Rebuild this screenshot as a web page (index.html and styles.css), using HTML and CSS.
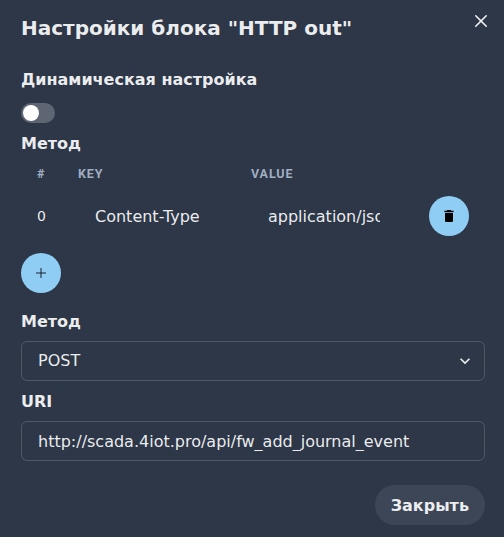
FILE: index.html
```
<!DOCTYPE html>
<html lang="ru">

<head>
    <meta charset="UTF-8">
    <title>Настройки блока</title>
    <link rel="stylesheet" href="styles.css">
</head>

<body>
    <section class="modal">
        <header class="modal-header">
            <h1>Настройки блока "HTTP out"</h1>
            <button type="button" class="close" aria-label="Close">
                <svg viewBox="0 0 24 24" width="12" height="12">
                    <path fill="currentColor" d="M.439,21.44a1.5,1.5,0,0,0,2.122,2.121L11.823,14.3a.25.25,0,0,1,.354,0l9.262,9.263a1.5,1.5,0,1,0,2.122-2.121L14.3,12.177a.25.25,0,0,1,0-.354l9.263-9.262A1.5,1.5,0,0,0,21.439.44L12.177,9.7a.25.25,0,0,1-.354,0L2.561.44A1.5,1.5,0,0,0,.439,2.561L9.7,11.823a.25.25,0,0,1,0,.354Z" />
                </svg>
            </button>
        </header>

        <div class="modal-body">
            <div class="label">Динамическая настройка</div>
            <label class="switch">
                <input type="checkbox">
                <span class="thumb"></span>
            </label>

            <div class="label">Метод</div>
            <table>
                <thead>
                    <tr>
                        <th class="col-num">#</th>
                        <th class="col-key">Key</th>
                        <th class="col-value">Value</th>
                        <th></th>
                    </tr>
                </thead>
                <tbody>
                    <tr>
                        <td>0</td>
                        <td><input type="text" class="input plain" value="Content-Type"></td>
                        <td><input type="text" class="input plain" value="application/json"></td>
                        <td>
                            <button type="button" class="round" aria-label="Delete">
                                <svg viewBox="0 0 24 24" width="16" height="16">
                                    <path fill="#000" d="M6 19c0 1.100.9 2 2 2h8c1.100 0 2-.9 2-2V7H6v12zM19 4h-3.500l-1-1h-5l-1 1H5v2h14V4z" />
                                </svg>
                            </button>
                        </td>
                    </tr>
                </tbody>
            </table>
            <button type="button" class="round add" aria-label="Add">
                <svg viewBox="0 0 10 10" width="10" height="10">
                    <path stroke="#1a202c" stroke-width="1" d="M5 0v10M0 5h10" />
                </svg>
            </button>

            <div class="label">Метод</div>
            <div class="select">
                <select class="input">
                    <option>POST</option>
                </select>
                <svg class="arrow" viewBox="0 0 24 24" width="20" height="20">
                    <path fill="currentColor" d="M16.59 8.590L12 13.170 7.410 8.590 6 10l6 6 6-6z" />
                </svg>
            </div>

            <div class="label">URI</div>
            <input type="text" class="input" value="http://scada.4iot.pro/api/fw_add_journal_event">
        </div>

        <footer class="modal-footer">
            <button type="button" class="btn">Закрыть</button>
        </footer>
    </section>
</body>

</html>
```
FILE: styles.css
```
* {
    box-sizing: border-box;
}

body {
    margin: 0;
    background: #2d3748;
    color: rgba(255, 255, 255, 0.92);
    font-family: "DejaVu Sans", sans-serif;
    font-size: 16px;
    line-height: 24px;
}

button,
input,
select {
    font: inherit;
    color: inherit;
}

button {
    border: none;
    padding: 0;
    cursor: pointer;
}

svg {
    display: block;
}

.modal {
    height: 537px;
    padding: 0 19px 0 21px;
}

.modal-header {
    position: relative;
    padding: 13px 0 12px;
}

.modal-header h1 {
    margin: 0;
    font-size: 20px;
    line-height: 30px;
    font-weight: bold;
}

.close {
    position: absolute;
    top: 5px;
    right: -12px;
    width: 32px;
    height: 32px;
    display: flex;
    align-items: center;
    justify-content: center;
    background: none;
}

.modal-body {
    padding-top: 13px;
}

.label {
    font-weight: bold;
    margin-bottom: 7px;
}

.switch {
    display: flex;
    width: 34px;
    height: 20px;
    margin: 11px 0 9px;
    padding: 2px;
    border-radius: 10px;
    background: rgba(255, 255, 255, 0.24);
}

.switch input {
    display: none;
}

.switch .thumb {
    width: 16px;
    height: 16px;
    border-radius: 50%;
    background: white;
}

table {
    width: 100%;
    table-layout: fixed;
    border-collapse: collapse;
    margin-top: -4px;
}

th {
    height: 29px;
    padding: 1px 16px 0;
    text-align: left;
    text-transform: uppercase;
    font-family: Roboto, sans-serif;
    font-size: 12.5px;
    line-height: 16px;
    letter-spacing: 0.9px;
    color: #a0aec0;
}

td {
    height: 56px;
    padding: 8px 16px;
    font-size: 14px;
    line-height: 20px;
}

.col-num {
    width: 41px;
}

.col-key {
    width: 173px;
}

.col-value {
    width: 178px;
}

th:first-child,
td:first-child {
    padding-right: 0;
}

.input {
    display: block;
    width: 100%;
    height: 40px;
    padding: 0 16px;
    font-size: 16px;
    background: none;
    border: 1px solid rgba(255, 255, 255, 0.16);
    border-radius: 6px;
    outline: none;
    appearance: none;
}

.input.plain {
    border-color: transparent;
}

.round {
    display: flex;
    align-items: center;
    justify-content: center;
    width: 40px;
    height: 40px;
    border-radius: 50%;
    background: #90cdf4;
}

.add {
    margin: 9px 0 17px;
}

.select {
    position: relative;
    margin-bottom: 9px;
}

.arrow {
    position: absolute;
    top: 10px;
    right: 10px;
    pointer-events: none;
}

.modal-footer {
    display: flex;
    justify-content: flex-end;
    padding-top: 24px;
}

.btn {
    height: 40px;
    padding: 1px 16px 0;
    border-radius: 20px;
    font-weight: bold;
    background: rgba(255, 255, 255, 0.08);
}
```
